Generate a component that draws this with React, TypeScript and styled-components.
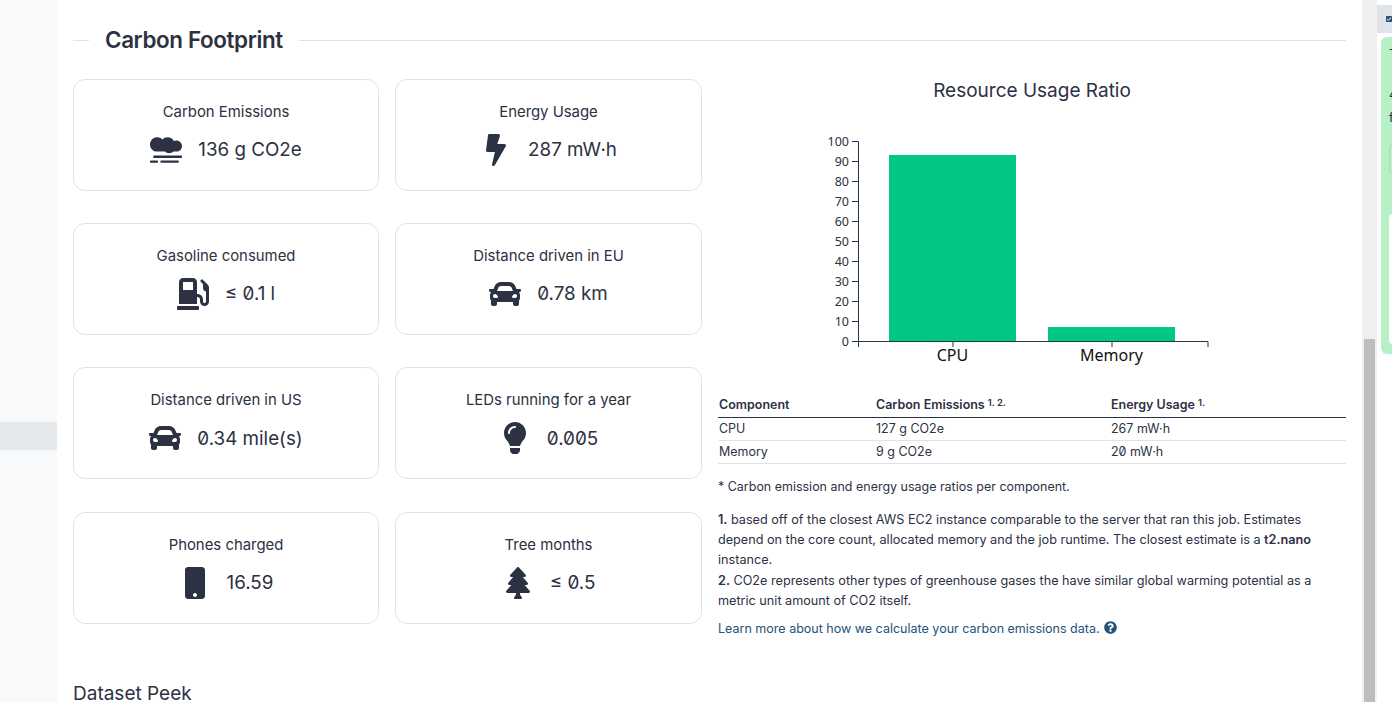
import React from 'react';
import styled, { createGlobalStyle } from 'styled-components';
import { FaSmog, FaBolt, FaGasPump, FaCar, FaLightbulb, FaMobile, FaTree, FaQuestionCircle, FaCheckSquare } from 'react-icons/fa';

const GlobalStyle = createGlobalStyle`
  html, body {
    margin: 0;
    height: 100%;
    overflow: hidden;
    background: #fff;
  }
  * {
    box-sizing: border-box;
  }
  body {
    font-family: Inter, "Liberation Sans", sans-serif;
    font-feature-settings: "zero" 1;
    color: #2c3143;
  }
`;

const Page = styled.div`
  display: grid;
  grid-template-columns: 57px 1305px 15px 15px;
  width: 1392px;
  height: 702px;
  overflow: hidden;
`;

const LeftPanel = styled.aside`
  background: #f8f9fa;
  padding-top: 422px;
`;

const ActiveRow = styled.div`
  height: 28px;
  background: #e5e8eb;
`;

const Center = styled.main`
  padding: 26px 16px 0;
  overflow: hidden;
`;

const Heading = styled.div`
  display: flex;
  align-items: center;
  gap: 16px;
  height: 28px;
  margin-bottom: 24.67px;

  &::before {
    content: '';
    width: 16px;
    height: 1px;
    background: #dee2e6;
  }
  &::after {
    content: '';
    flex: 1;
    height: 1px;
    background: #dee2e6;
  }
`;

const Title = styled.h2`
  margin: 0;
  font-size: 22.4px;
  line-height: 28px;
  font-weight: 600;
  letter-spacing: -0.37px;
`;

const Columns = styled.div`
  display: grid;
  grid-template-columns: 629px 628px;
  column-gap: 16px;
`;

const Cards = styled.div`
  display: grid;
  grid-template-columns: 306px 307px;
  grid-auto-rows: 112px;
  column-gap: 16px;
  row-gap: 32.33px;
`;

const Card = styled.div`
  display: flex;
  flex-direction: column;
  align-items: center;
  padding-top: 23px;
  border: 1px solid #dee2e6;
  border-radius: 12px;
  background: #fff;
`;

const CardLabel = styled.div`
  font-size: 14.9px;
  line-height: 18px;
  height: 18px;
`;

const CardValue = styled.div`
  display: flex;
  align-items: center;
  justify-content: center;
  gap: 16px;
  margin-top: 13px;
  height: 32px;
  font-size: 18.8px;
  font-weight: 400;

  svg {
    width: 32px;
    height: 32px;
    color: #2c3143;
  }
`;

const Side = styled.section`
  min-width: 0;
`;

const ChartTitle = styled.h3`
  margin: 0;
  padding-top: 1px;
  height: 25px;
  font-size: 19px;
  line-height: 22px;
  font-weight: 400;
  text-align: center;
`;

const Chart = styled.svg`
  display: block;
  margin: 24px 0 0 99px;
  font-family: "Noto Sans", "Open Sans", sans-serif;
  font-feature-settings: normal;
`;

const Table = styled.table`
  width: 100%;
  margin-top: 15px;
  border-collapse: collapse;
  font-size: 12.48px;
  line-height: 18px;

  th {
    font-weight: 600;
    text-align: left;
    padding: 3px 1px 3px;
    border-bottom: 1px solid #2c3143;
  }
  td {
    padding: 2px 1px 2px;
    height: 23px;
    border-bottom: 1px solid #dee2e6;
  }
  sup {
    font-size: 9.4px;
    line-height: 0;
    vertical-align: 3px;
  }
`;

const HeadCell = styled.th<{ $width?: number }>`
  width: ${p => (p.$width ? `${p.$width}px` : 'auto')};
`;

const Note = styled.p`
  margin: 14px 0 0;
  font-size: 12.48px;
  line-height: 18px;
`;

const Footnotes = styled.p`
  margin: 14px 0 0;
  font-size: 12.65px;
  line-height: 20.4px;

  b {
    font-weight: 600;
  }
`;

const LearnMore = styled.a`
  display: flex;
  align-items: center;
  gap: 4px;
  margin-top: 7px;
  font-size: 12.52px;
  line-height: 20px;
  color: #25537b;

  svg {
    width: 13px;
    height: 13px;
    margin-top: -2px;
  }
`;

const SubHeading = styled.h3`
  margin: 44px 0 0;
  font-size: 19px;
  line-height: 22px;
  font-weight: 400;
`;

const ScrollTrack = styled.div`
  display: flex;
  flex-direction: column;
  justify-content: flex-end;
  padding: 0 2px;
  background: #f0f0f0;
`;

const ScrollThumb = styled.div`
  height: 363px;
  background: #bdbdbd;
`;

const RightPanel = styled.aside`
  overflow: hidden;
  padding-top: 5px;
  background: #fff;
`;

const PanelHeader = styled.div`
  display: flex;
  align-items: center;
  height: 28px;
  padding-left: 9px;
  background: #e0e3e8;
  color: #25537b;
  font-size: 14px;
`;

const JobBox = styled.div`
  width: 60px;
  height: 317px;
  margin: 4px 0 0 4px;
  padding: 8px;
  border-radius: 6px;
  background: #b5f1c5;
  font-size: 12.5px;
  line-height: 20px;
`;

const JobLine = styled.div<{ $gap: number }>`
  margin-top: ${p => p.$gap}px;
  white-space: nowrap;
`;

const Outlined = styled.div`
  height: 30px;
  margin-top: 16px;
  border: 1px solid #a5dcb4;
  border-radius: 4px;
`;

const WhiteBlock = styled.div`
  height: 130px;
  margin-top: 40px;
  border-radius: 4px;
  background: #fff;
`;

const cards = [
  { label: 'Carbon Emissions', value: '136 g CO2e', Icon: FaSmog },
  { label: 'Energy Usage', value: '287 mW·h', Icon: FaBolt },
  { label: 'Gasoline consumed', value: '≤ 0.1 l', Icon: FaGasPump },
  { label: 'Distance driven in EU', value: '0.78 km', Icon: FaCar },
  { label: 'Distance driven in US', value: '0.34 mile(s)', Icon: FaCar },
  { label: 'LEDs running for a year', value: '0.005', Icon: FaLightbulb },
  { label: 'Phones charged', value: '16.59', Icon: FaMobile },
  { label: 'Tree months', value: '≤ 0.5', Icon: FaTree },
];

const ticks = [0, 10, 20, 30, 40, 50, 60, 70, 80, 90, 100];

export default function App() {
  return (
    <Page>
      <GlobalStyle />
      <LeftPanel>
        <ActiveRow />
      </LeftPanel>
      <Center>
        <Heading>
          <Title>Carbon Footprint</Title>
        </Heading>
        <Columns>
          <Cards>
            {cards.map(({ label, value, Icon }) => (
              <Card key={label}>
                <CardLabel>{label}</CardLabel>
                <CardValue>
                  <Icon />
                  <span>{value}</span>
                </CardValue>
              </Card>
            ))}
          </Cards>
          <Side>
            <ChartTitle>Resource Usage Ratio</ChartTitle>
            <Chart width="420" height="250" viewBox="0 0 420 250">
              <rect x="72" y="27" width="127" height="186" fill="#00c781" />
              <rect x="231" y="199" width="127" height="14" fill="#00c781" />
              <path d="M41.5 13.5V213.5H391V219M41.5 219V213.5M136 213.5V219M295 213.5V219" fill="none" stroke="#2c3143" strokeWidth="1" />
              {ticks.map(t => (
                <g key={t}>
                  <line x1="35" x2="41.5" y1={213.5 - t * 2} y2={213.5 - t * 2} stroke="#2c3143" />
                  <text x="32" y={218 - t * 2} textAnchor="end" fontSize="12.5" fill="#2c3143">{t}</text>
                </g>
              ))}
              <text x="135.5" y="233" textAnchor="middle" fontSize="16" fill="#111">CPU</text>
              <text x="294.5" y="233" textAnchor="middle" fontSize="16" fill="#111">Memory</text>
            </Chart>
            <Table>
              <thead>
                <tr>
                  <HeadCell $width={157}>Component</HeadCell>
                  <HeadCell $width={235}>Carbon Emissions <sup>1. 2.</sup></HeadCell>
                  <HeadCell>Energy Usage <sup>1.</sup></HeadCell>
                </tr>
              </thead>
              <tbody>
                <tr>
                  <td>CPU</td>
                  <td>127 g CO2e</td>
                  <td>267 mW·h</td>
                </tr>
                <tr>
                  <td>Memory</td>
                  <td>9 g CO2e</td>
                  <td>20 mW·h</td>
                </tr>
              </tbody>
            </Table>
            <Note>* Carbon emission and energy usage ratios per component.</Note>
            <Footnotes>
              <b>1.</b> based off of the closest AWS EC2 instance comparable to the server that ran this job. Estimates depend on the core count, allocated memory and the job runtime. The closest estimate is a <b>t2.nano</b> instance.
              <br />
              <b>2.</b> CO2e represents other types of greenhouse gases the have similar global warming potential as a metric unit amount of CO2 itself.
            </Footnotes>
            <LearnMore>
              Learn more about how we calculate your carbon emissions data.
              <FaQuestionCircle />
            </LearnMore>
          </Side>
        </Columns>
        <SubHeading>Dataset Peek</SubHeading>
      </Center>
      <ScrollTrack>
        <ScrollThumb />
      </ScrollTrack>
      <RightPanel>
        <PanelHeader>
          <FaCheckSquare />
        </PanelHeader>
        <JobBox>
          <JobLine $gap={0}>T</JobLine>
          <JobLine $gap={20}>4</JobLine>
          <JobLine $gap={3}>f</JobLine>
          <Outlined />
          <WhiteBlock />
        </JobBox>
      </RightPanel>
    </Page>
  );
}
